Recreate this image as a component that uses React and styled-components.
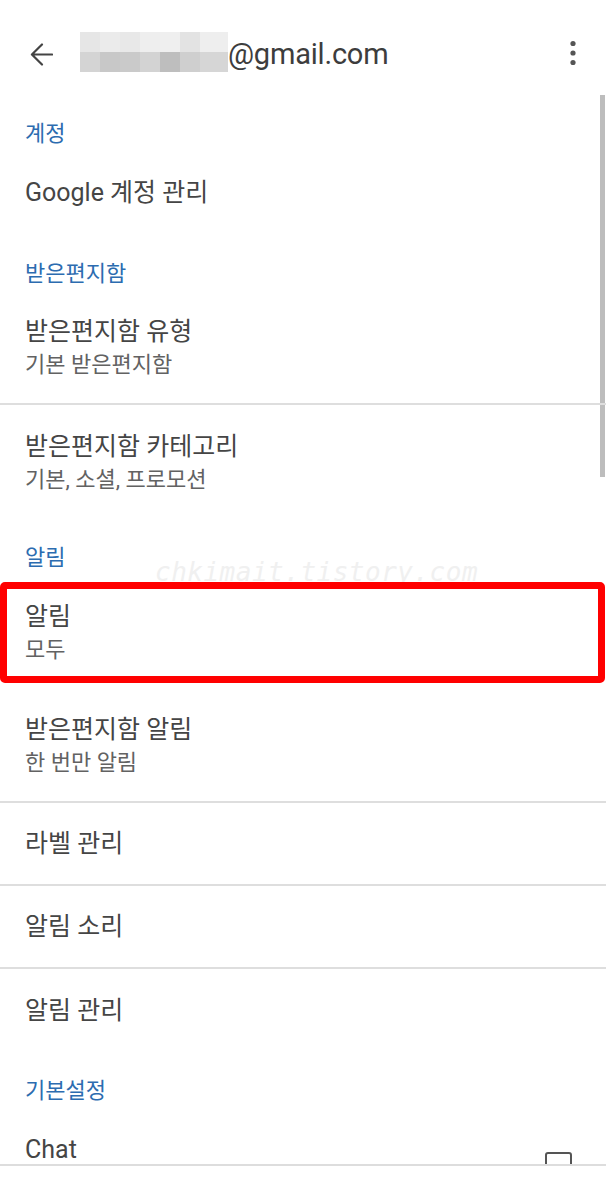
import React from "react";
import styled, { createGlobalStyle } from "styled-components";

const GlobalStyle = createGlobalStyle`
  html, body {
    margin: 0;
    padding: 0;
    background: #fff;
  }
  body {
    font-family: Roboto, "Noto Sans CJK KR", sans-serif;
  }
`;

const mosaic = [
  ["#e6e6e6", "#ebebeb", "#e8e8e8", "#eeeeee", "#efefef", "#e3e3e3", "#eeeeee"],
  ["#d4d4d4", "#c8c8c8", "#cacaca", "#d3d3d3", "#bebebe", "#cfcfcf", "#d6d6d6"],
];

export default function App() {
  return (
    <Screen>
      <GlobalStyle />
      <Content>
        <Toolbar>
          <BackIcon viewBox="0 0 24 24">
            <path d="M23 12H2.5M12.5 1.5L2 12l10.5 10.5" />
          </BackIcon>
          <Account>
            <Mosaic>
              {mosaic.map((row, r) =>
                row.map((c, i) => <Tile key={`${r}-${i}`} $c={c} />)
              )}
            </Mosaic>
            <Email>@gmail.com</Email>
          </Account>
          <MoreIcon viewBox="0 0 8 26">
            <circle cx="4" cy="3.5" r="2.6" />
            <circle cx="4" cy="13" r="2.6" />
            <circle cx="4" cy="22.5" r="2.6" />
          </MoreIcon>
        </Toolbar>

        <Watermark>chkimait.tistory.com</Watermark>
        <Scrollbar />

        <SectionHeader>계정</SectionHeader>
        <Row $h={84}>
          <Title>Google 계정 관리</Title>
        </Row>

        <SectionHeader>받은편지함</SectionHeader>
        <Row $h={114} $divider>
          <Title>받은편지함 유형</Title>
          <Sub>기본 받은편지함</Sub>
        </Row>
        <Row $h={114}>
          <Title>받은편지함 카테고리</Title>
          <Sub>기본, 소셜, 프로모션</Sub>
        </Row>

        <SectionHeader>알림</SectionHeader>
        <Row $h={114}>
          <Title>알림</Title>
          <Sub>모두</Sub>
          <Highlight />
        </Row>
        <Row $h={114} $divider>
          <Title>받은편지함 알림</Title>
          <Sub>한 번만 알림</Sub>
        </Row>
        <Row $h={83} $divider>
          <Title>라벨 관리</Title>
        </Row>
        <Row $h={83} $divider>
          <Title>알림 소리</Title>
        </Row>
        <Row $h={83}>
          <Title>알림 관리</Title>
        </Row>

        <SectionHeader>기본설정</SectionHeader>
        <CheckRow>
          <Title>Chat</Title>
          <Checkbox />
        </CheckRow>
      </Content>
      <NavBar />
    </Screen>
  );
}

const Screen = styled.div`
  width: 606px;
  height: 1187px;
  display: flex;
  flex-direction: column;
  overflow: hidden;
  background: #fff;
`;

const Content = styled.main`
  position: relative;
  flex: 1;
  min-height: 0;
  overflow: hidden;
`;

const Toolbar = styled.header`
  height: 95px;
  box-sizing: border-box;
  padding: 13px 29px 0 30px;
  display: flex;
  align-items: center;
`;

const BackIcon = styled.svg`
  width: 23px;
  height: 23px;
  flex-shrink: 0;
  fill: none;
  stroke: #444;
  stroke-width: 2.3;
  stroke-linecap: round;
  stroke-linejoin: round;
`;

const Account = styled.div`
  display: flex;
  align-items: center;
  margin-left: 27px;
`;

const Mosaic = styled.div`
  display: grid;
  grid-template-columns: repeat(6, 20px) 28px;
  grid-template-rows: 20px 20px;
  margin-top: -4px;
`;

const Tile = styled.div`
  background: ${(p) => p.$c};
`;

const Email = styled.span`
  font-size: 29px;
  line-height: 36px;
  color: #3d3d3d;
  letter-spacing: -0.2px;
`;

const MoreIcon = styled.svg`
  width: 8px;
  height: 26px;
  margin-left: auto;
  margin-top: -2px;
  fill: #555;
`;

const Watermark = styled.div`
  position: absolute;
  top: 557px;
  left: 155px;
  font-family: "DejaVu Sans Mono", monospace;
  font-style: italic;
  font-size: 26px;
  letter-spacing: 0.5px;
  color: #f0f0f0;
  pointer-events: none;
`;

const Scrollbar = styled.div`
  position: absolute;
  top: 95px;
  left: 600px;
  width: 5px;
  height: 382px;
  background: #bdbdbd;
`;

const SectionHeader = styled.h2`
  margin: 0;
  height: 56px;
  box-sizing: border-box;
  padding: 27px 25px 5px;
  font-size: 22px;
  line-height: 24px;
  font-weight: 400;
  color: #2c6cb0;
`;

const Row = styled.div`
  position: relative;
  height: ${(p) => p.$h}px;
  box-sizing: border-box;
  padding: 0 25px;
  display: flex;
  flex-direction: column;
  justify-content: center;
  border-bottom: ${(p) => (p.$divider ? "2px solid #dedede" : "none")};
`;

const Title = styled.div`
  font-size: 25px;
  line-height: 32px;
  color: #454545;
`;

const Sub = styled.div`
  margin-top: 3px;
  font-size: 22px;
  line-height: 28px;
  color: #626262;
`;

const Highlight = styled.div`
  position: absolute;
  top: 7px;
  left: 0;
  right: 1px;
  bottom: 6px;
  border: 7px solid #ff0000;
  border-radius: 5px;
`;

const CheckRow = styled.div`
  height: 83px;
  box-sizing: border-box;
  padding: 0 34px 0 25px;
  display: flex;
  align-items: center;
  justify-content: space-between;
`;

const Checkbox = styled.div`
  align-self: flex-start;
  margin-top: 44px;
  width: 27px;
  height: 24px;
  box-sizing: border-box;
  border: 2.5px solid #555;
  border-radius: 3px;
`;

const NavBar = styled.footer`
  height: 23px;
  flex-shrink: 0;
  box-sizing: border-box;
  border-top: 2px solid #dddddd;
  background: #fff;
`;
